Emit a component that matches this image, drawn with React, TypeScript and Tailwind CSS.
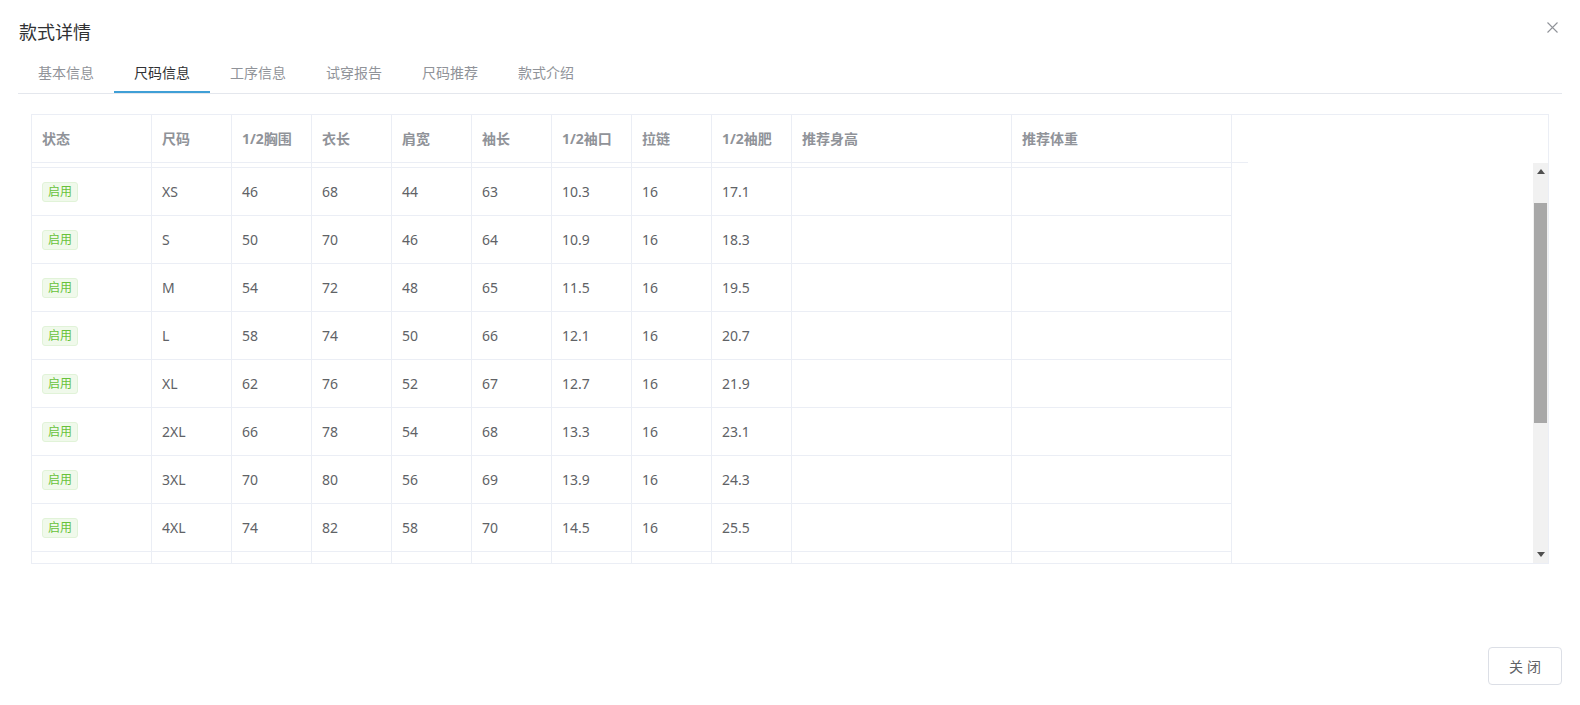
import React from "react";

const cols = [
  { title: "状态", w: "w-[120px]" },
  { title: "尺码", w: "w-[80px]" },
  { title: "1/2胸围", w: "w-[80px]" },
  { title: "衣长", w: "w-[80px]" },
  { title: "肩宽", w: "w-[80px]" },
  { title: "袖长", w: "w-[80px]" },
  { title: "1/2袖口", w: "w-[80px]" },
  { title: "拉链", w: "w-[80px]" },
  { title: "1/2袖肥", w: "w-[80px]" },
  { title: "推荐身高", w: "w-[220px]" },
  { title: "推荐体重", w: "w-[220px]" },
];

const rows = [
  ["XS", "46", "68", "44", "63", "10.3", "16", "17.1"],
  ["S", "50", "70", "46", "64", "10.9", "16", "18.3"],
  ["M", "54", "72", "48", "65", "11.5", "16", "19.5"],
  ["L", "58", "74", "50", "66", "12.1", "16", "20.7"],
  ["XL", "62", "76", "52", "67", "12.7", "16", "21.9"],
  ["2XL", "66", "78", "54", "68", "13.3", "16", "23.1"],
  ["3XL", "70", "80", "56", "69", "13.9", "16", "24.3"],
  ["4XL", "74", "82", "58", "70", "14.5", "16", "25.5"],
];

const tabs = ["基本信息", "尺码信息", "工序信息", "试穿报告", "尺码推荐", "款式介绍"];

function Tag() {
  return (
    <span className="inline-flex items-center h-[20px] px-[5px] rounded-[3px] border border-[#e1f3d8] bg-[#f0f9eb] text-[#67c23a] text-[12px] leading-[18px]">
      启用
    </span>
  );
}

function Scrollbar() {
  return (
    <div className="w-[15px] h-full bg-[#f1f1f1] flex flex-col items-center">
      {/* up arrow */}
      <div className="h-[17px] w-full flex items-center justify-center">
        <svg width="8" height="5" viewBox="0 0 8 5">
          <path d="M0 5 L4 0 L8 5 Z" fill="#505050" />
        </svg>
      </div>
      <div className="h-[23px]" />
      <div className="w-[13px] h-[220px] bg-[#a8a8a8]" />
      <div className="flex-1" />
      <div className="h-[17px] w-full flex items-center justify-center">
        <svg width="8" height="5" viewBox="0 0 8 5">
          <path d="M0 0 L8 0 L4 5 Z" fill="#505050" />
        </svg>
      </div>
    </div>
  );
}

export default function App() {
  return (
    <div className="h-[705px] bg-white px-[18px] font-['Noto_Sans','Noto_Sans_CJK_SC',sans-serif]">
      {/* Title */}
      <div className="h-[52px] pt-[20px] flex items-start justify-between">
        <span className="text-[18px] leading-[24px] text-[#303133] pl-[1px]">款式详情</span>
        <svg width="11" height="11" viewBox="0 0 11 11" className="mt-[2px] mr-[4px]">
          <path d="M0.5 0.5 L10.5 10.5 M10.5 0.5 L0.5 10.5" stroke="#909399" strokeWidth="1.1" />
        </svg>
      </div>

      {/* Tabs */}
      <div className="flex h-[42px] border-b border-[#e4e7ed]">
        {tabs.map((t, i) => (
          <div
            key={t}
            className={
              "relative h-[41px] px-[20px] flex items-center text-[14px] " +
              (i === 1 ? "text-[#303133]" : "text-[#909399]")
            }
          >
            {t}
            {i === 1 && <div className="absolute left-0 right-0 bottom-0 h-[2px] bg-[#3f9fd6]" />}
          </div>
        ))}
      </div>

      {/* Table */}
      <div className="mt-[20px] mx-[13px] border border-[#ebeef5] h-[450px] flex flex-col">
        {/* header */}
        <div className="flex h-[48px] shrink-0">
          {cols.map((c) => (
            <div
              key={c.title}
              className={c.w + " shrink-0 h-full border-r border-b border-[#ebeef5] pl-[10px] flex items-center text-[14px] font-bold text-[#909399]"}
            >
              {c.title}
            </div>
          ))}
          <div className="w-[16px] shrink-0 h-full border-b border-[#ebeef5]" />
        </div>

        {/* body */}
        <div className="flex flex-1 min-h-0">
          <div className="flex-1 flex flex-col overflow-hidden">
            <div className="flex h-[5px] shrink-0">
              {cols.map((c) => (
                <div key={c.title} className={c.w + " shrink-0 h-full border-r border-b border-[#ebeef5]"} />
              ))}
            </div>
            {rows.map((r) => (
              <div key={r[0]} className="flex h-[48px] shrink-0">
                <div className={cols[0].w + " shrink-0 h-full border-r border-b border-[#ebeef5] pl-[10px] flex items-center"}>
                  <Tag />
                </div>
                {r.map((v, j) => (
                  <div
                    key={j}
                    className={cols[j + 1].w + " shrink-0 h-full border-r border-b border-[#ebeef5] pl-[10px] flex items-center text-[14px] text-[#606266]"}
                  >
                    {v}
                  </div>
                ))}
                <div className={cols[9].w + " shrink-0 h-full border-r border-b border-[#ebeef5]"} />
                <div className={cols[10].w + " shrink-0 h-full border-r border-b border-[#ebeef5]"} />
              </div>
            ))}
            <div className="flex flex-1">
              {cols.map((c) => (
                <div key={c.title} className={c.w + " shrink-0 h-full border-r border-[#ebeef5]"} />
              ))}
            </div>
          </div>
          <Scrollbar />
        </div>
      </div>

      {/* Footer */}
      <div className="flex justify-end mt-[83px]">
        <button className="w-[74px] h-[38px] border border-[#dcdfe6] rounded-[4px] bg-white text-[14px] text-[#606266] tracking-[4px] pl-[4px]">
          关闭
        </button>
      </div>
    </div>
  );
}
